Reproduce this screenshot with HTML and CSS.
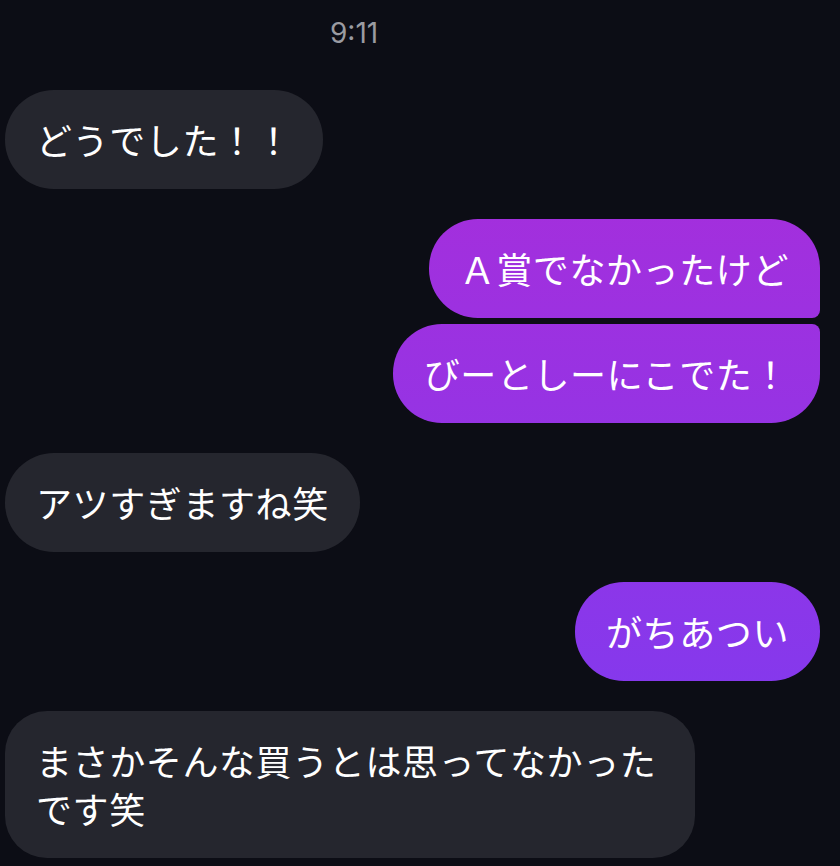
FILE: index.html
```html
<!DOCTYPE html>
<html lang="ja">

<head>
    <meta charset="utf-8">
    <title>Messages</title>
    <link rel="stylesheet" href="styles.css">
</head>

<body>
    <div class="chat">
        <div class="time">9:11</div>

        <div class="bubble received">どうでした！！</div>

        <div class="group">
            <div class="bubble sent first">Ａ賞でなかったけど</div>
            <div class="bubble sent last">びーとしーにこでた！</div>
        </div>

        <div class="bubble received">アツすぎますね笑</div>

        <div class="bubble sent">がちあつい</div>

        <div class="bubble received wide">まさかそんな買うとは思ってなかったです笑</div>
    </div>
</body>

</html>
```

FILE: styles.css
```css
body {
    background: #0c0d15;
    margin: 0;
    padding: 0;
    font-family: "Noto Sans CJK JP", "Noto Sans", sans-serif;
}

.chat {
    display: flex;
    flex-direction: column;
    gap: 30px;
    padding: 17px 20px 0 5px;
}

.time {
    margin: 0 0 11px 325px;
    color: #9a9ba1;
    font-family: Inter, "Liberation Sans", sans-serif;
    font-size: 28px;
    line-height: 32px;
}

.group {
    display: flex;
    flex-direction: column;
    align-items: flex-end;
    gap: 6px;
}

.bubble {
    box-sizing: border-box;
    max-width: 690px;
    padding: 25px 31px 26px;
    border-radius: 49px;
    color: #ffffff;
    font-size: 36px;
    line-height: 48px;
    letter-spacing: 0.6px;
}

.received {
    align-self: flex-start;
    background-color: #25262e;
}

.sent {
    align-self: flex-end;
    background: linear-gradient(180deg, #b02bd6 0%, #7a3cf2 100%) fixed;
}

.sent.first {
    border-bottom-right-radius: 8px;
}

.sent.last {
    border-top-right-radius: 8px;
}

.wide {
    border-radius: 42px;
}
```
